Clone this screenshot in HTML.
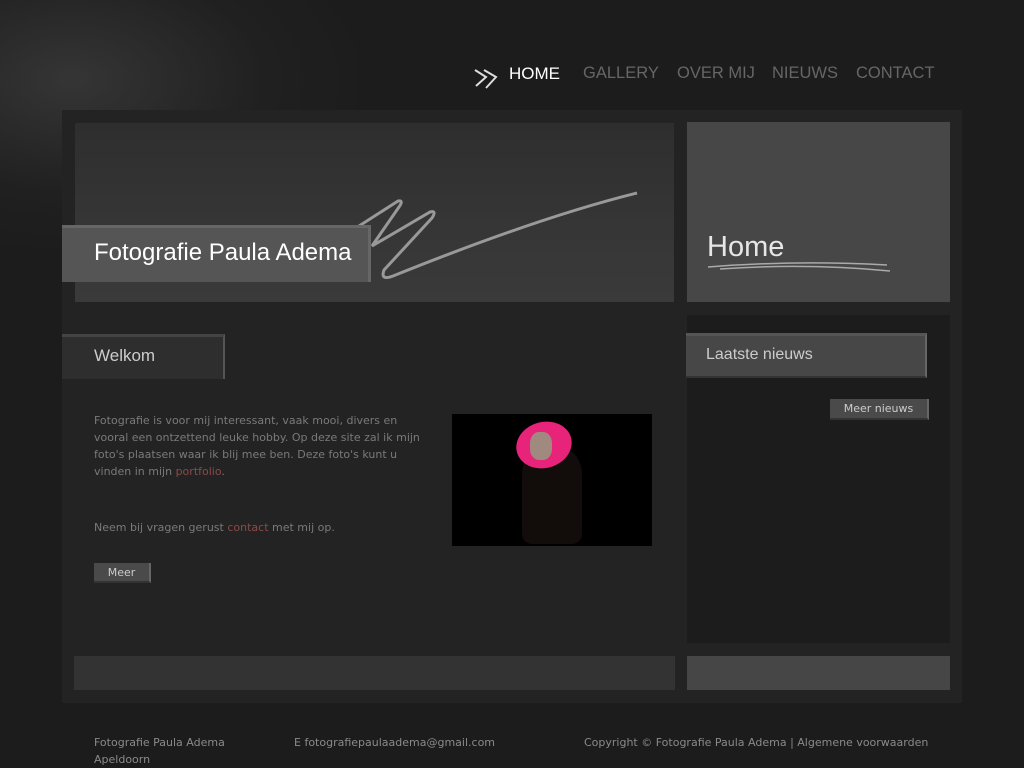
<!DOCTYPE html>
<html><head><meta charset="utf-8"><style>
*{margin:0;padding:0;box-sizing:border-box}
body{width:1024px;height:768px;overflow:hidden;background:#1c1c1c;font-family:"DejaVu Sans",Verdana,sans-serif;position:relative}
.glow{position:absolute;left:-60px;top:-40px;width:440px;height:300px;background:radial-gradient(ellipse at 30% 40%,rgba(100,100,100,.35),rgba(60,60,60,.12) 45%,rgba(28,28,28,0) 70%)}
.nav{position:absolute;top:64px;font-family:"Liberation Sans",Arial,sans-serif;font-size:16.5px;color:#666}
.panel{position:absolute;left:62px;top:110px;width:900px;height:593px;background:#232323}
.abs{position:absolute}
.hdr{left:75px;top:123px;width:599px;height:179px;background:linear-gradient(180deg,#2e2e2e,#363636 60%,#3a3a3a)}
.lbl{font-family:"Liberation Sans",Arial,sans-serif;color:#fff}
.btn{background:#4a4a4a;color:#ccc;font-size:11px;text-align:center;border-right:2px solid #666;border-bottom:2px solid #333}
p{font-size:11px;color:#7a7a7a;line-height:17px}
a{color:#8a4a4a;text-decoration:none}
.ft{font-size:11px;color:#8a8a8a;line-height:17px}
</style></head><body>
<div class="glow"></div>
<svg class="abs" style="left:472px;top:66px" width="30" height="24"><path d="M3,4 L14,11 L4,20 M12,4 L24,11 L14,22" stroke="#ddd" stroke-width="2" fill="none"/></svg>
<div class="nav" style="left:509px;color:#fff;font-size:17px">HOME</div>
<div class="nav" style="left:583px">GALLERY</div>
<div class="nav" style="left:677px">OVER MIJ</div>
<div class="nav" style="left:772px">NIEUWS</div>
<div class="nav" style="left:856px">CONTACT</div>
<div class="panel"></div>
<div class="abs hdr"></div>
<svg class="abs" style="left:0;top:0" width="1024" height="400"><path d="M345,235 L398,201 Q404,200 399,207 L372,246 L430,212 Q437,210 432,218 L384,270 Q380,281 393,276 C470,245 560,212 637,193" stroke="#999" stroke-width="3" fill="none"/></svg>
<div class="abs lbl" style="left:62px;top:225px;width:309px;height:57px;background:#555;border-top:3px solid #666;border-right:3px solid #666;font-size:24px;padding:11px 0 0 32px">Fotografie Paula Adema</div>
<div class="abs" style="left:687px;top:122px;width:263px;height:180px;background:#474747"></div>
<div class="abs lbl" style="left:707px;top:231px;font-size:29px;color:#e6e6e6">Home</div>
<svg class="abs" style="left:705px;top:260px" width="190" height="16"><path d="M3,7 Q90,0 182,5 M15,9 Q100,3 185,11" stroke="#aaa" stroke-width="1.5" fill="none"/></svg>
<div class="abs lbl" style="left:62px;top:334px;width:163px;height:45px;background:#2e2e2e;border-top:3px solid #444;border-right:2px solid #555;font-size:17px;color:#ccc;padding:9px 0 0 32px">Welkom</div>
<p class="abs" style="left:94px;top:412px;width:334px">Fotografie is voor mij interessant, vaak mooi, divers en vooral een ontzettend leuke hobby. Op deze site zal ik mijn foto's plaatsen waar ik blij mee ben. Deze foto's kunt u vinden in mijn <a>portfolio</a>.</p>
<p class="abs" style="left:94px;top:519px">Neem bij vragen gerust <a>contact</a> met mij op.</p>
<div class="abs btn" style="left:94px;top:563px;width:57px;height:20px;line-height:19px">Meer</div>
<div class="abs" style="left:452px;top:414px;width:200px;height:132px;background:#000;overflow:hidden">
<div class="abs" style="left:70px;top:30px;width:60px;height:100px;border-radius:30px 30px 10px 10px;background:#120d0b"></div>
<div class="abs" style="left:64px;top:8px;width:56px;height:46px;border-radius:50%;background:#e8237a;transform:rotate(-15deg)"></div>
<div class="abs" style="left:78px;top:18px;width:22px;height:28px;border-radius:40%;background:#a08a80"></div>
</div>
<div class="abs" style="left:687px;top:315px;width:263px;height:328px;background:#1c1c1c"></div>
<div class="abs lbl" style="left:686px;top:333px;width:241px;height:45px;background:#474747;border-top:3px solid #555;border-right:2px solid #666;border-bottom:2px solid #333;font-size:16px;color:#ccc;padding:10px 0 0 20px">Laatste nieuws</div>
<div class="abs btn" style="left:830px;top:399px;width:99px;height:21px;line-height:20px">Meer nieuws</div>
<div class="abs" style="left:74px;top:656px;width:601px;height:34px;background:#333"></div>
<div class="abs" style="left:687px;top:656px;width:263px;height:34px;background:#464646"></div>
<div class="abs ft" style="left:94px;top:734px">Fotografie Paula Adema<br>Apeldoorn</div>
<div class="abs ft" style="left:294px;top:734px">E fotografiepaulaadema@gmail.com</div>
<div class="abs ft" style="left:584px;top:734px">Copyright © Fotografie Paula Adema | Algemene voorwaarden</div>
</body></html>
